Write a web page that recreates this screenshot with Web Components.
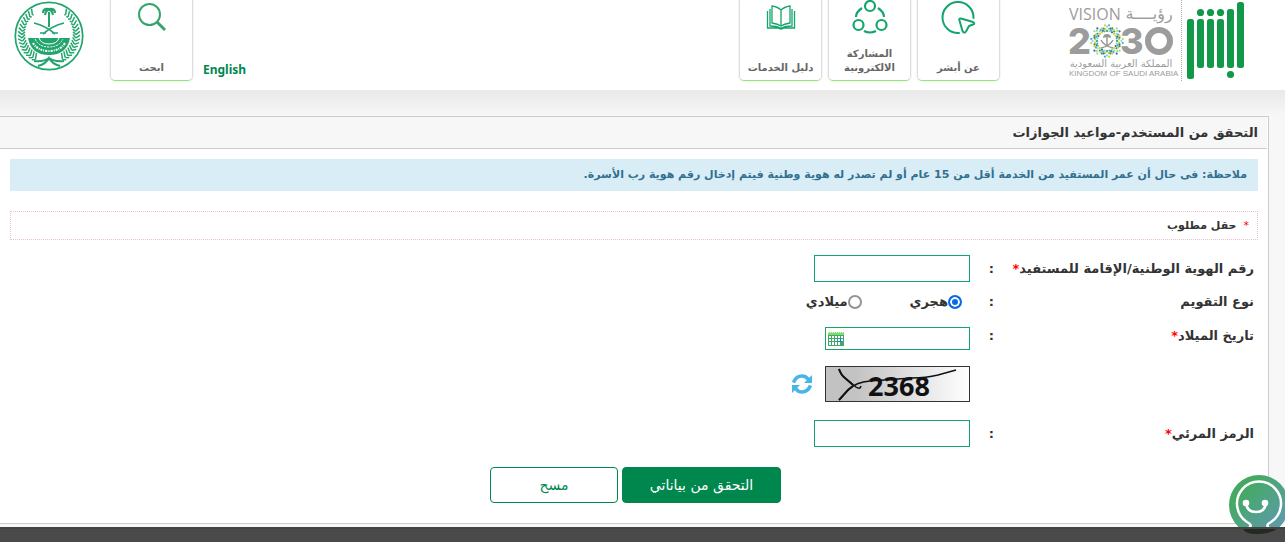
<!DOCTYPE html>
<html lang="ar" dir="rtl">
<head>
<meta charset="utf-8">
<meta name="viewport" content="width=device-width, initial-scale=1">
<title>التحقق من المستخدم</title>
<style>
  html, body { margin: 0; min-height: 100%; }
  body { background: #f7f7f7; color: #333; font-family: "DejaVu Sans", sans-serif; font-size: 13px; }
</style>
</head>
<body>
<absher-app></absher-app>

<template id="t-app">
  <style>
    :host { display: flex; flex-direction: column; min-height: 100vh; }
    main { background: linear-gradient(#e9e9e9, #f7f7f7 26px); padding-top: 26px; flex: none; padding-bottom: 3px; }
    footer { background: #4a4a4a; border-top: 2px solid #45443a; flex: 1; min-height: 13px; }
    .chat { position: fixed; right: -4px; top: 475px; z-index: 2; }
  </style>
  <absher-header></absher-header>
  <main>
    <content-panel heading="التحقق من المستخدم-مواعيد الجوازات">
      <info-note>ملاحظة: فى حال أن عمر المستفيد من الخدمة أقل من 15 عام أو لم تصدر له هوية وطنية فيتم إدخال رقم هوية رب الأسرة.</info-note>
      <required-hint>حقل مطلوب</required-hint>
      <verify-form></verify-form>
    </content-panel>
  </main>
  <footer></footer>
  <chat-bubble class="chat"></chat-bubble>
</template>

<template id="t-header">
  <style>
    :host { display: flex; height: 90px; background: #fff; padding: 0 40px 0 14px; box-sizing: border-box; align-items: flex-start; }
    svg { display: block; flex: none; direction: ltr; overflow: visible; }
    .divider { width: 0; height: 81px; border-right: 1px dotted #aaa; margin: 0 4px 0 7px; }
    nav { display: flex; gap: 6px; margin-right: 69px; }
    .end { display: flex; margin-right: auto; }
    .lang { align-self: flex-end; margin: 0 0 3px 10px; width: 44px; direction: ltr; font: bold 12px/16px "Noto Sans", sans-serif; color: #00874e; text-decoration: none; }
    .emblem { margin-right: 26px; }
  </style>
  <svg width="59" height="82" viewBox="0 0 59 82" fill="#119848" role="img" aria-label="أبشر">
    <rect x="1" y="19" width="7" height="60" rx="2.500"/><rect x="11" y="19" width="7" height="49" rx="2.500"/>
    <rect x="21" y="19" width="7" height="49" rx="2.500"/><rect x="31" y="19" width="7" height="49" rx="2.500"/>
    <rect x="41" y="9" width="7" height="59" rx="2.500"/><rect x="51" y="2" width="7" height="66" rx="2.500"/>
    <circle cx="14.500" cy="12.500" r="3.600"/><circle cx="24.500" cy="12.500" r="3.600"/><circle cx="34.500" cy="12.500" r="3.600"/><circle cx="44.500" cy="74.500" r="3.600"/>
  </svg>
  <span class="divider"></span>
  <svg width="105" height="82" viewBox="0 0 105 82" fill="#9c9c9c" role="img" aria-label="Vision 2030">
    <text x="0" y="20" font-family="Open Sans" font-size="16">VISION</text>
    <text x="80" y="19" text-anchor="middle" font-family="DejaVu Sans" font-size="16">رؤيــــة</text>
    <text x="-1" y="54" font-family="Inter" font-weight="800" font-size="36">2</text>
    <text x="51" y="54" font-family="Inter" font-weight="800" font-size="36">3</text>
    <circle cx="90" cy="41" r="11" fill="none" stroke="#9c9c9c" stroke-width="6"/>
    <g id="star"></g>
    <path d="M38 36v9M32 48q9-2 12-8M44 48q-9-2-12-8" fill="none" stroke="#999" stroke-width="1.500"/><path d="M34 38q0-4 4-4t4 4l-4-1z" fill="#999"/>
    <text x="52" y="67" text-anchor="middle" font-family="DejaVu Sans" font-size="10">المملكة العربية السعودية</text>
    <text x="0" y="76" font-family="Liberation Sans" font-size="8">KINGDOM OF SAUDI ARABIA</text>
  </svg>
  <nav>
    <nav-card label="عن أبشر">
      <svg width="34" height="36" viewBox="0 0 34 36" fill="none" stroke="#13a56b" stroke-width="2" stroke-linecap="round" stroke-linejoin="round"><path d="M31.500 18A15.500 15.500 0 1 0 17 33"/><path d="M17.500 20.500Q16.500 18 19 18.500L31 22Q33.500 23.500 31 24.500L27 26L24 31.500Q22 34 20.500 31Z"/></svg>
    </nav-card>
    <nav-card label="المشاركة الالكترونية">
      <svg width="36" height="36" viewBox="0 0 36 36" fill="none" stroke="#13a56b" stroke-width="2.200"><circle cx="18" cy="6" r="5"/><circle cx="6.500" cy="25" r="5"/><circle cx="29.500" cy="25" r="5"/><path d="M10 8Q4 12 4 17M26 8q6 4 6 9M12 31q6 3 12 0"/></svg>
    </nav-card>
    <nav-card label="دليل الخدمات">
      <svg width="30" height="36" viewBox="0 0 30 36" fill="none" stroke="#13a56b" stroke-width="1.300"><path d="M15 26V10Q12 7 6 6v17q6 1 9 3Q18 24 24 23V6Q18 7 15 10M4 9v17q7 0 10 2h2q3-2 10-2V9M1.500 11v17H12q3 2 6 0h10.500V11"/></svg>
    </nav-card>
  </nav>
  <div class="end">
    <a class="lang" href="#en" lang="en">English</a>
    <nav-card label="ابحث">
      <svg width="30" height="36" viewBox="0 0 30 36" fill="none" stroke="#35a56c"><circle cx="12.500" cy="14.500" r="10.500" stroke-width="2"/><path d="M20 22l8 8" stroke-width="3"/></svg>
    </nav-card>
    <svg class="emblem" width="70" height="72" viewBox="0 0 70 72" fill="none" stroke="#22a56d" role="img" aria-label="وزارة الداخلية">
      <circle cx="35" cy="36" r="33.700" stroke-width="1.700"/>
      <g id="wreath" stroke-width="1.500"></g>
      <path d="M35 12v15" stroke-width="2"/>
      <path d="M29 13q0-5 6-4q6-1 6 4M31 15q1-5 4-5q3 0 4 5M30 10h10" stroke-width="2.200"/>
      <path d="M20 23q12 3 21 11M50 23q-12 3-21 11M26 33h6M38 33h6" stroke-width="1.700"/>
      <path d="M14 38h42q-3 17-21 17T14 38z" fill="#22a56d" stroke="none"/>
      <path d="M25 38q2 6 10 6t10-6" stroke="#fff" stroke-width="1"/>
      <path d="M19 43q5 8 16 8t16-8" stroke="#fff" stroke-width="2" stroke-dasharray="2 1 1 1"/>
      <path d="M21 39q4 8 14 8t14-8" stroke="#fff" stroke-dasharray="2 1"/>
      <path d="M20 61q10 1 15-3q5 4 15 3M24 66q8-2 11-8q3 6 11 8" stroke-width="2"/>
    </svg>
  </div>
</template>

<template id="t-card">
  <style>
    :host { display: block; }
    a { box-sizing: border-box; width: 83px; height: 81px; padding-bottom: 5px; border: 1px solid #ddd; border-top: 0; border-bottom: 1px solid #8fea73; border-radius: 0 0 5px 5px; box-shadow: 0 0 2px #ddd; display: flex; flex-direction: column; align-items: center; justify-content: space-between; color: #666; text-decoration: none; font-size: 10px; line-height: 14px; font-weight: bold; text-align: center; }
  </style>
  <a href="#"><slot></slot><span></span></a>
</template>

<template id="t-panel">
  <style>
    :host { display: block; margin-right: 16px; border: 1px solid #ccc; border-left: 0; background: #fff; padding-right: 1px; }
    h1 { margin: 0; height: 31px; background: #f7f7f7; border-bottom: 1px solid #ccc; font-size: 13px; line-height: 31px; padding: 0 9px; }
    div { padding: 10px 9px 20px 10px; }
  </style>
  <h1></h1>
  <div><slot></slot></div>
</template>

<template id="t-note">
  <style>
    :host { display: block; background: #d9edf7; color: #31708f; font-size: 11px; font-weight: bold; line-height: 32px; height: 32px; padding: 0 11px; white-space: nowrap; }
  </style>
  <slot></slot>
</template>

<template id="t-hint">
  <style>
    :host { display: block; margin-top: 20px; border: 1px dotted #e8bfcc; font-size: 11px; font-weight: bold; line-height: 27px; padding: 0 8px; }
    b { color: #f00; margin-left: 7px; font-weight: normal; }
  </style>
  <b>*</b><slot></slot>
</template>

<template id="t-form">
  <style>
    :host { display: block; margin-top: 15px; }
    form { margin: 0; }
    .row { display: grid; grid-template-columns: 260px 4px 1fr; padding-right: 4px; align-items: center; font-size: 13px; font-weight: bold; line-height: 20px; }
    .row > :nth-child(3) { margin-right: 20px; }
    .row + .row { margin-top: 10px; }
    .row + .row.date { margin-top: 15px; }
    .row + .row.captcha { margin-top: 16px; }
    .row + .row.code { margin-top: 18px; }
    .date { align-items: start; }
    .date > :nth-child(-n+2) { line-height: 18px; }
    i { color: #f00; font-style: normal; }
    input[type=text] { box-sizing: border-box; width: 156px; height: 27px; border: 1px solid #13a56b; background: #fff; padding: 0 4px; margin: 0; font: inherit; outline: 0; }
    .picker { display: flex; align-items: center; box-sizing: border-box; width: 145px; height: 23px; border: 1px solid #13a56b; padding-left: 2px; }
    .picker input[type=text] { border: 0; height: 19px; flex: 1; width: 0; }
    .picker button, .refresh { border: 0; background: none; padding: 0; display: block; }
    svg { display: block; direction: ltr; }
    fieldset { border: 0; margin: 0; padding: 0 8px 0 0; display: flex; height: 20px; }
    fieldset label { display: flex; align-items: center; gap: 0; }
    fieldset label + label { margin-right: 48px; }
    fieldset input { appearance: none; box-sizing: border-box; width: 14px; height: 14px; margin: 0; border: 2px solid #949494; border-radius: 50%; background: #fff; }
    fieldset input:checked { border-color: #0a6ae4; background: #0a6ae4; box-shadow: inset 0 0 0 2px #fff; }
    .shot { display: flex; align-items: center; gap: 13px; }
    .actions { display: flex; justify-content: center; gap: 4px; margin-top: 20px; padding-left: 3px; }
    .actions button { height: 36px; border: 1px solid #00874e; border-radius: 4px; font: 14px/20px "DejaVu Sans", sans-serif; padding: 0; }
    .send { width: 159px; background: #00874e; color: #fff; }
    .clear { width: 128px; background: #fff; color: #00874e; }
  </style>
  <form onsubmit="return false">
    <div class="row"><label for="id">رقم الهوية الوطنية/الإقامة للمستفيد<i>*</i></label><span>:</span><div><input id="id" type="text"></div></div>
    <div class="row"><span id="cal">نوع التقويم</span><span>:</span>
      <fieldset aria-labelledby="cal"><label><input type="radio" name="cal" checked>هجري</label><label><input type="radio" name="cal">ميلادي</label></fieldset></div>
    <div class="row date"><label for="dob">تاريخ الميلاد<i>*</i></label><span>:</span>
      <div class="picker"><input id="dob" type="text"><button type="button" aria-label="التقويم">
        <svg width="16" height="16" viewBox="0 0 16 16"><path fill="#43a867" d="M0 1h16v14H0z"/><path fill="#7fdc6c" d="M0 1h16v3H0z"/><path stroke="#d9ffd0" stroke-dasharray="1 1" d="M0 1.500h16"/><path fill="#fff" d="M1 5h2v2H1zM4 5h2v2H4zM7 5h2v2H7zM10 5h2v2h-2zM13 5h2v2h-2zM1 8h2v2H1zM4 8h2v2H4zM7 8h2v2H7zM10 8h2v2h-2zM13 8h2v2h-2zM1 11h2v3H1zM4 11h2v3H4zM7 11h2v3H7zM10 11h2v3h-2z"/><path stroke="#1678e0" d="M12.500 7v4M9 10.500h4"/></svg>
      </button></div></div>
    <div class="row captcha"><span></span><span></span><div class="shot">
      <svg width="145" height="36" viewBox="0 0 145 36" role="img" aria-label="الرمز المرئي">
        <defs><linearGradient id="g"><stop stop-color="#c2c2c2"/><stop offset=".2" stop-color="#c2c2c2"/><stop offset="1" stop-color="#fff"/></linearGradient></defs>
        <rect x=".5" y=".5" width="144" height="35" fill="url(#g)" stroke="#333"/>
        <text x="74" y="30" text-anchor="middle" font-family="Open Sans" font-weight="700" font-size="27" fill="#111">2368</text>
        <path d="M14 3q2 6 6 9l11 9q4 3 5-1M14 34l9-10q8-8 22-9l42-3q14 0 26-3l18-5" fill="none" stroke="#111" stroke-width="1.500"/><path d="M14 3q2 6 6 9l8 7M14 34l9-10 5-4" fill="none" stroke="#111" stroke-width="2"/>
      </svg>
      <button class="refresh" type="button" aria-label="تحديث"><svg width="20" height="20" viewBox="0 0 20 20"><g fill="none" stroke="#49b6e6" stroke-width="3.600"><path d="M1.500 8.500Q4 2 10 2q4 0 6.500 3.500"/><path d="M18.500 11.500Q16 18 10 18q-4 0-6.500-3.500"/></g><path fill="#49b6e6" d="M20 1v8h-8zM0 19v-8h8z"/></svg></button>
    </div></div>
    <div class="row code"><label for="code">الرمز المرئي<i>*</i></label><span>:</span><div><input id="code" type="text"></div></div>
    <div class="actions"><button class="send" type="submit">التحقق من بياناتي</button><button class="clear" type="reset">مسح</button></div>
  </form>
</template>

<template id="t-chat">
  <style>:host { display: block; } svg { display: block; }</style>
  <svg width="60" height="60" viewBox="0 0 60 60" role="img" aria-label="المساعد">
    <defs><linearGradient id="c" x1="0" y1="0" x2="1" y2="1"><stop offset=".25" stop-color="#45a964"/><stop offset=".8" stop-color="#5b9ca6"/></linearGradient>
    <clipPath id="k"><path d="M0 0h60v52H0z"/></clipPath></defs>
    <g clip-path="url(#k)"><circle cx="30" cy="30" r="30" fill="url(#c)"/>
    <path d="M20 53q4-3-2-6A22 22 0 1 1 42 47q-6 3-2 6" fill="none" stroke="#fff" stroke-width="2.500"/>
    <path d="M17 28q1 9 10 9t10-9" fill="none" stroke="#fff" stroke-width="2.500"/><circle cx="17" cy="28" r="3.300" fill="#fff"/><circle cx="36" cy="28" r="3.300" fill="#fff"/></g>
    <path d="M14 54h34q-8 5-20 5T14 54z" fill="#252925"/>
  </svg>
</template>

<script>
  const attach = (el, id) => {
    const root = el.attachShadow({ mode: 'open' });
    root.append(document.getElementById(id).content.cloneNode(true));
    return root;
  };
  const NS = 'http://www.w3.org/2000/svg';
  const draw = (parent, tag, attrs) => {
    const n = document.createElementNS(NS, tag);
    for (const k in attrs) n.setAttribute(k, attrs[k]);
    parent.append(n);
  };
  const simple = id => class extends HTMLElement {
    constructor() { super(); attach(this, id); }
  };

  customElements.define('nav-card', class extends HTMLElement {
    constructor() { super(); this.root = attach(this, 't-card'); }
    connectedCallback() { this.root.querySelector('span').textContent = this.getAttribute('label'); }
  });
  customElements.define('content-panel', class extends HTMLElement {
    constructor() { super(); this.root = attach(this, 't-panel'); }
    connectedCallback() { this.root.querySelector('h1').textContent = this.getAttribute('heading'); }
  });
  customElements.define('info-note', simple('t-note'));
  customElements.define('required-hint', simple('t-hint'));
  customElements.define('verify-form', simple('t-form'));
  customElements.define('chat-bubble', simple('t-chat'));
  customElements.define('absher-header', class extends HTMLElement {
    constructor() {
      super();
      const root = attach(this, 't-header');
      const star = root.getElementById('star');
      const colors = ['#2f9a57', '#35b6cf', '#b9d84a', '#e6c33a', '#2372a8', '#8fd0dc'];
      // Mosaic star of small dots with eight points around the palm
      for (let ring = 0; ring < 4; ring++)
        for (let i = 0; i < 24; i++) {
          const a = (i + ring / 2) * Math.PI / 12;
          const r = 10 + ring * (1.7 + 0.5 * Math.cos(8 * a));
          draw(star, 'circle', { cx: 38 + r * Math.cos(a), cy: 41 + r * Math.sin(a), r: 1.1, fill: colors[(i * 5 + ring * 2) % 6] });
        }
      const wreath = root.getElementById('wreath');
      // Palm leaves along both sides of the emblem
      for (let i = 0; i < 17; i++)
        for (const s of [-1, 1]) {
          const a = (-52 + i * 7) * Math.PI / 180, c = Math.cos(a), d = Math.sin(a);
          const x = 35 + s * 27 * c, y = 36 + 27 * d;
          draw(wreath, 'path', { d: `M${x} ${y}l${s * (4 * c + 2 * d)} ${4 * d - 3}M${x} ${y}l${s * (-4 * c + 1)} ${-4 * d - 3}` });
        }
    }
  });
  customElements.define('absher-app', simple('t-app'));
</script>
</body>
</html>
